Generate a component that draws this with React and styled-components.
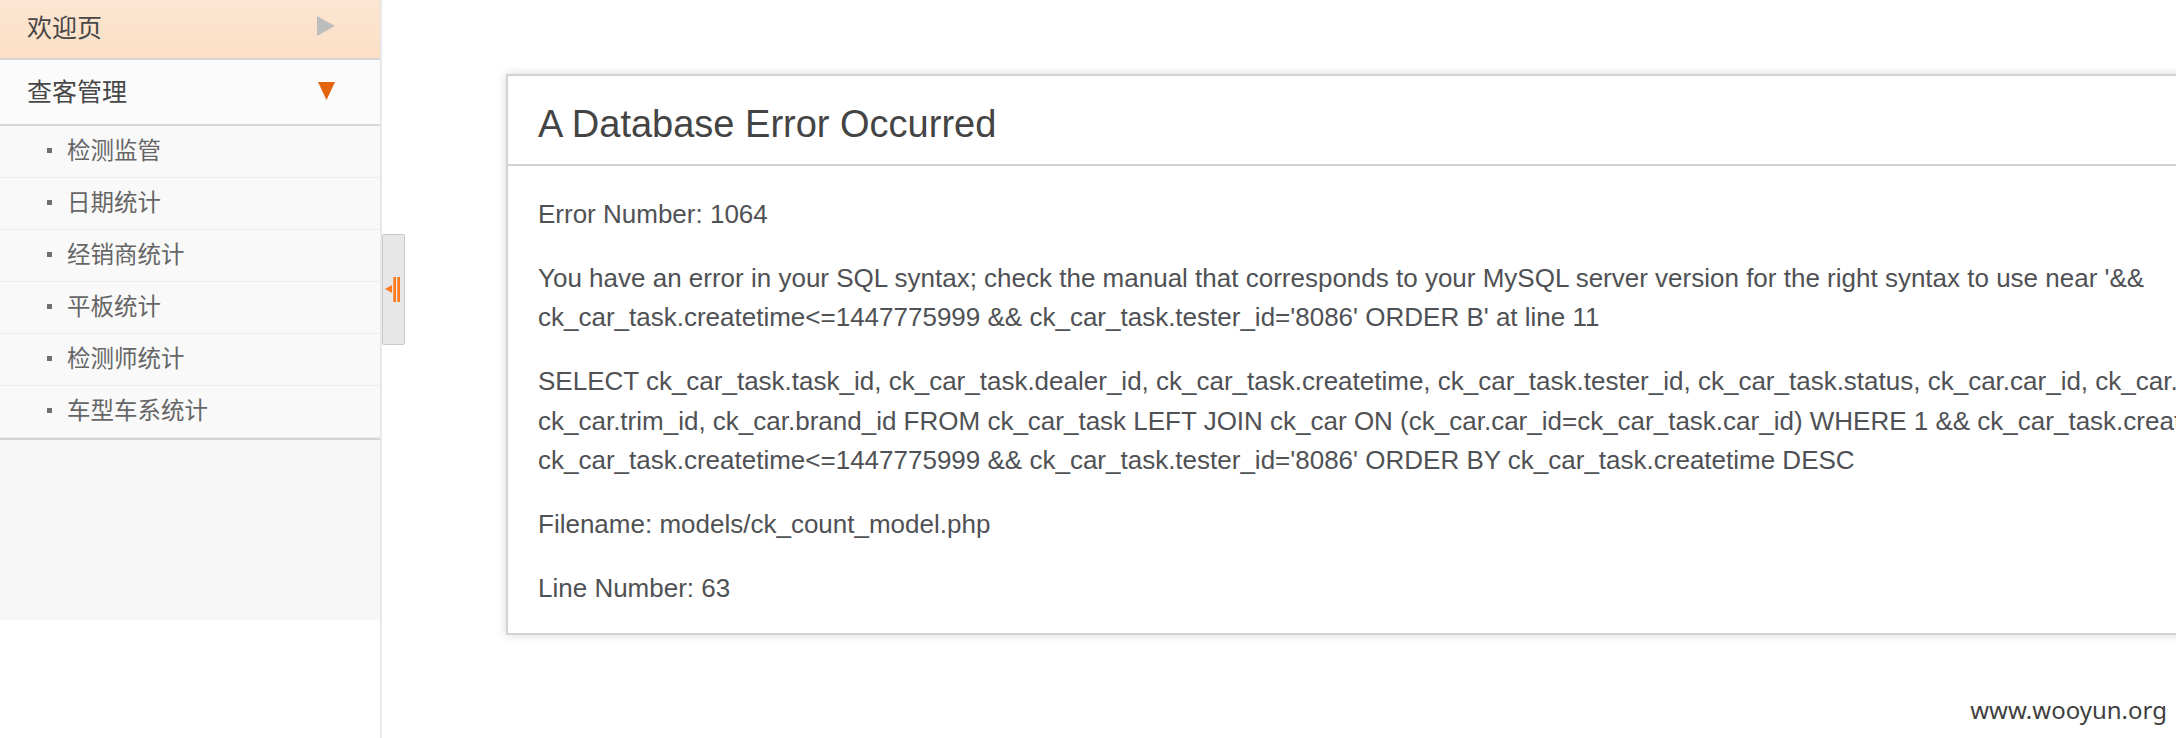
import React from "react";
import styled, { createGlobalStyle } from "styled-components";

const Global = createGlobalStyle`
  html, body { margin: 0; padding: 0; background: #fff; overflow: hidden; }
  #root { height: 738px; }
`;

const Page = styled.div`
  position: relative;
  display: flex;
  height: 738px;
  width: 2176px;
  overflow: hidden;
  font-family: "Liberation Sans", Helvetica, Arial, sans-serif;
`;

const Sidebar = styled.aside`
  flex: 0 0 380px;
  display: flex;
  flex-direction: column;
  border-right: 2px solid #e9e9e9;
  font-family: "Noto Sans CJK SC", "Noto Sans", sans-serif;
`;

const MenuHeader = styled.div`
  display: flex;
  align-items: center;
  justify-content: space-between;
  height: ${(p) => p.$h}px;
  padding: 0 45px 0 27px;
  padding-bottom: ${(p) => p.$lift}px;
  box-sizing: border-box;
  border-bottom: 2px solid #d6d6d6;
  background: ${(p) =>
    p.$active ? "linear-gradient(to bottom, #fce6d2, #fbdfc5)" : "#fbfbfb"};
  color: #474747;
  font-size: 25px;
  line-height: 1;
`;

const SubList = styled.ul`
  list-style: none;
  margin: 0;
  padding: 0;
  border-bottom: 2px solid #d4d4d4;
`;

const SubItem = styled.li`
  display: flex;
  align-items: center;
  gap: 15px;
  height: 52px;
  padding: 0 0 3px 47px;
  box-sizing: border-box;
  border-bottom: 1px solid #ececec;
  background: #f9f9f9;
  color: #666;
  font-size: 23.5px;
  line-height: 1;
  &::before {
    content: "";
    width: 5px;
    height: 5px;
    background: #707070;
    flex: none;
  }
`;

const Filler = styled.div`
  height: 180px;
  background: #f7f7f7;
`;

const ToggleColumn = styled.div`
  flex: 0 0 23px;
`;

const ToggleButton = styled.div`
  margin-top: 234px;
  height: 111px;
  box-sizing: border-box;
  border: 1px solid #c9c9c9;
  border-radius: 2px;
  background: #e7e7e7;
  display: flex;
  align-items: center;
  justify-content: center;
  padding-right: 2px;
`;

const Main = styled.main`
  flex: 1 1 auto;
  min-width: 0;
  overflow: hidden;
  padding: 74px 0 0 101px;
`;

const Card = styled.section`
  width: 1900px;
  border: 2px solid #d2d2d2;
  box-shadow: 0 0 10px #d8d8d8;
  background: #fff;
  color: #4f5155;
`;

const Title = styled.h1`
  margin: 0;
  padding: 28px 30px 20px;
  border-bottom: 2px solid #d2d2d2;
  font-size: 38px;
  line-height: 40px;
  font-weight: normal;
  color: #444;
`;

const Body = styled.div`
  padding: 29px 30px 24px;
`;

const Para = styled.p`
  margin: 0 0 24.2px;
  font-size: 26px;
  line-height: 39.6px;
  &:last-child { margin-bottom: 0; }
`;

const Line = styled.span`
  display: block;
  white-space: nowrap;
`;

const Watermark = styled.div`
  position: absolute;
  right: 9px;
  bottom: 12px;
  font-family: "Noto Sans", "Open Sans", sans-serif;
  font-size: 24px;
  color: #3f3f3f;
`;

const RightArrow = () => (
  <svg width="18" height="20" viewBox="0 0 18 20">
    <polygon points="0,0 18,10 0,20" fill="#bdbdbd" />
  </svg>
);

const DownArrow = () => (
  <svg width="17" height="18" viewBox="0 0 17 18">
    <polygon points="0,0 17,0 8.5,18" fill="#e2640c" />
  </svg>
);

const ToggleIcon = () => (
  <svg width="16" height="26" viewBox="0 0 16 26">
    <polygon points="0,12 7,8 7,16" fill="#ff7a1f" />
    <rect x="8.3" y="0" width="2.7" height="25" fill="#ff7a1f" />
    <rect x="12.3" y="0" width="2.7" height="25" fill="#ff7a1f" />
  </svg>
);

const subs = ["检测监管", "日期统计", "经销商统计", "平板统计", "检测师统计", "车型车系统计"];

export default function App() {
  return (
    <>
      <Global />
      <Page>
        <Sidebar>
          <MenuHeader $active $h={60} $lift={6}>
            <span>欢迎页</span>
            <RightArrow />
          </MenuHeader>
          <MenuHeader $h={66} $lift={3}>
            <span>查客管理</span>
            <DownArrow />
          </MenuHeader>
          <SubList>
            {subs.map((s) => (
              <SubItem key={s}>{s}</SubItem>
            ))}
          </SubList>
          <Filler />
        </Sidebar>
        <ToggleColumn>
          <ToggleButton>
            <ToggleIcon />
          </ToggleButton>
        </ToggleColumn>
        <Main>
          <Card>
            <Title>A Database Error Occurred</Title>
            <Body>
              <Para>Error Number: 1064</Para>
              <Para>
                <Line>
                  You have an error in your SQL syntax; check the manual that corresponds to your MySQL server version for the right syntax to use near '&amp;&amp;
                </Line>
                <Line>
                  ck_car_task.createtime&lt;=1447775999 &amp;&amp; ck_car_task.tester_id='8086' ORDER B' at line 11
                </Line>
              </Para>
              <Para>
                <Line>
                  SELECT ck_car_task.task_id, ck_car_task.dealer_id, ck_car_task.createtime, ck_car_task.tester_id, ck_car_task.status, ck_car.car_id, ck_car.model_id, ck_car.series_id,
                </Line>
                <Line>
                  ck_car.trim_id, ck_car.brand_id FROM ck_car_task LEFT JOIN ck_car ON (ck_car.car_id=ck_car_task.car_id) WHERE 1 &amp;&amp; ck_car_task.createtime&gt;=1447689600 &amp;&amp;
                </Line>
                <Line>
                  ck_car_task.createtime&lt;=1447775999 &amp;&amp; ck_car_task.tester_id='8086' ORDER BY ck_car_task.createtime DESC
                </Line>
              </Para>
              <Para>Filename: models/ck_count_model.php</Para>
              <Para>Line Number: 63</Para>
            </Body>
          </Card>
        </Main>
        <Watermark>www.wooyun.org</Watermark>
      </Page>
    </>
  );
}
